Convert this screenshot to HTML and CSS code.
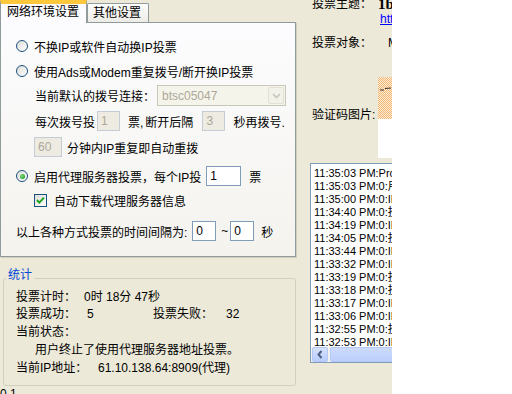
FILE: index.html
```html
<!DOCTYPE html>
<html>
<head>
<meta charset="utf-8">
<link rel="stylesheet" href="styles.css">
</head>
<body>
<div class="app">
  <div class="left">
    <div class="tabs">
      <div class="tab active">网络环境设置</div>
      <div class="tab">其他设置</div>
    </div>
    <div class="panel">
      <div class="row r1"><span class="radio"></span><span class="lbl">不换IP或软件自动换IP投票</span></div>
      <div class="row r2"><span class="radio"></span><span class="lbl">使用Ads或Modem重复拨号/断开换IP投票</span></div>
      <div class="row r3"><span>当前默认的拨号连接：</span>
        <div class="combo"><span class="combo-text">btsc05047</span>
          <span class="combo-btn"><svg width="9" height="6" viewBox="0 0 9 6"><path d="M1 1 L4.5 4.5 L8 1" fill="none" stroke="#C9C7BA" stroke-width="1.6"/></svg></span>
        </div>
      </div>
      <div class="row r4"><span>每次拨号投</span><span class="box dis w23 ml2">1</span><span class="ml8">票,</span><span class="ml2">断开后隔</span><span class="box dis w23 ml9">3</span><span class="ml8">秒再拨号.</span></div>
      <div class="row r5"><span class="box dis w28">60</span><span class="ml5">分钟内IP重复即自动重拨</span></div>
      <div class="row r6"><span class="radio on"><span class="dot"></span></span><span class="lbl">启用代理服务器投票，每个IP投</span><span class="box w35 ml5">1</span><span class="ml8">票</span></div>
      <div class="row r7"><span class="check"><svg width="11" height="11" viewBox="0 0 11 11"><path d="M2 5 L4.3 7.6 L9 2.6" fill="none" stroke="#21A121" stroke-width="2"/></svg></span><span class="ml7">自动下载代理服务器信息</span></div>
      <div class="row r8"><span>以上各种方式投票的时间间隔为:</span><span class="box w24 ml5">0</span><span class="ml5">~</span><span class="box w24 ml2">0</span><span class="ml7">秒</span></div>
    </div>
    <fieldset class="group">
      <legend>统计</legend>
      <div class="srow first"><span class="k w68">投票计时：</span><span>0时 18分 47秒</span></div>
      <div class="srow"><span class="k w71">投票成功：</span><span class="w66">5</span><span class="w73">投票失败：</span><span>32</span></div>
      <div class="srow"><span>当前状态：</span></div>
      <div class="srow indent"><span>用户终止了使用代理服务器地址投票。</span></div>
      <div class="srow"><span class="k w82">当前IP地址：</span><span>61.10.138.64:8909(代理)</span></div>
    </fieldset>
    <div class="ver">0.1</div>
  </div>
  <div class="right">
    <div class="ra"><span class="w66">投票主题：</span><span class="title">1b</span></div>
    <div class="rb"><span class="link">http://</span></div>
    <div class="rc"><span class="w76">投票对象：</span><span>M</span></div>
    <div class="rd">
      <span class="cap-lbl">验证码图片:</span>
      <div class="cap">
        <div class="cap-img"><svg width="14" height="41" viewBox="0 0 14 41"><path d="M2 13 L6 13 M7 11.5 L13 11" fill="none" stroke="#333" stroke-width="1"/></svg></div>
        <div class="cap-white"></div>
      </div>
    </div>
    <div class="list">
      <div class="lines">
        <div>11:35:03 PM:Proxy</div>
        <div>11:35:03 PM:0:用户终止</div>
        <div>11:35:00 PM:0:IP</div>
        <div>11:34:40 PM:0:投票</div>
        <div>11:34:19 PM:0:IP</div>
        <div>11:34:05 PM:0:投票</div>
        <div>11:33:44 PM:0:IP</div>
        <div>11:33:32 PM:0:IP</div>
        <div>11:33:19 PM:0:投票</div>
        <div>11:33:18 PM:0:投票</div>
        <div>11:33:17 PM:0:IP</div>
        <div>11:33:06 PM:0:IP</div>
        <div>11:32:55 PM:0:投票</div>
        <div>11:32:53 PM:0:IP</div>
      </div>
      <div class="hscroll">
        <span class="sbtn"><svg width="14" height="13" viewBox="0 0 14 13"><path d="M8.5 3 L5.5 6.5 L8.5 10" fill="none" stroke="#4D6185" stroke-width="2"/></svg></span>
        <span class="thumb"></span>
      </div>
    </div>
  </div>
</div>
</body>
</html>
```
FILE: styles.css
```css
* { box-sizing: border-box; }
html, body { margin: 0; padding: 0; background: #ffffff; }
body {
  font-family: "Liberation Sans", "Noto Sans CJK SC", sans-serif;
  font-size: 12px;
  color: #000;
}
.app {
  width: 392px;
  height: 394px;
  background: #ECE9D8;
  display: flex;
  overflow: hidden;
}
.left { width: 296px; flex: none; }
.tabs {
  height: 22px;
  display: flex;
  align-items: flex-end;
}
.tab {
  white-space: nowrap;
  line-height: 17px;
}
.tab.active {
  position: relative;
  z-index: 1;
  width: 87px;
  height: 23px;
  margin-bottom: -1px;
  background: #FCFCFE;
  border-left: 1px solid #919B9C;
  border-right: 1px solid #919B9C;
  border-top: 3px solid #FFC83C;
  box-shadow: inset 0 1px 0 #FFC83C, 0 -1px 0 #E68B2C;
  padding-left: 6px;
  padding-top: 1px;
}
.tab:not(.active) {
  width: 62px;
  height: 19px;
  border: 1px solid #919B9C;
  border-bottom: none;
  border-radius: 2px 2px 0 0;
  background: linear-gradient(#FEFEFE, #ECEBE6);
  padding-left: 5px;
  padding-top: 1px;
}
.panel {
  width: 296px;
  height: 235px;
  border: 1px solid #919B9C;
  background: linear-gradient(#FCFCFE, #F4F3EE);
  box-shadow: 1px 1px 0 #D0CEBF;
}
.row {
  display: flex;
  align-items: center;
  height: 20px;
  white-space: nowrap;
}
.r1 { margin-top: 13px; padding-left: 15px; }
.r2 { margin-top: 5px; padding-left: 15px; }
.r3 { margin-top: 4px; height: 21px; padding-left: 34px; }
.r4 { margin-top: 5px; padding-left: 34px; }
.r5 { margin-top: 6px; padding-left: 33px; }
.r6 { margin-top: 9px; padding-left: 15px; }
.r7 { margin-top: 4px; padding-left: 33px; }
.r8 { margin-top: 11px; padding-left: 15px; }
.lbl { margin-left: 6px; }
.radio {
  width: 12px;
  height: 12px;
  border-radius: 50%;
  border: 1px solid #1C5180;
  background: linear-gradient(135deg, #DCDCD7, #FFFFFF);
  display: flex;
  align-items: center;
  justify-content: center;
  flex: none;
}
.dot {
  width: 5px;
  height: 5px;
  border-radius: 50%;
  background: radial-gradient(circle at 40% 40%, #8FE08F, #21A121 70%);
}
.check {
  width: 13px;
  height: 13px;
  border: 1px solid #1C5180;
  background: linear-gradient(135deg, #DCDCD7, #FFFFFF);
  display: flex;
  align-items: center;
  justify-content: center;
  flex: none;
}
.combo {
  margin-left: 2px;
  width: 129px;
  height: 21px;
  border: 1px solid #C9C7BA;
  background: #F5F4EA;
  display: flex;
  align-items: center;
  justify-content: space-between;
  padding-left: 4px;
  padding-right: 1px;
}
.combo-text { color: #ACA899; }
.combo-btn {
  width: 16px;
  height: 17px;
  border: 1px solid #E3E1D6;
  border-radius: 2px;
  background: #F2F1EA;
  display: flex;
  align-items: center;
  justify-content: center;
}
.box {
  height: 20px;
  border: 1px solid #7F9DB9;
  background: #fff;
  display: flex;
  align-items: center;
  padding-left: 3px;
  flex: none;
}
.box.dis {
  border-color: #C5CCD4;
  background: #EDEBE2;
  color: #ACA899;
}
.w23 { width: 23px; }
.w24 { width: 24px; }
.w28 { width: 28px; }
.w35 { width: 35px; }
.ml2 { margin-left: 2px; }
.ml5 { margin-left: 5px; }
.ml7 { margin-left: 7px; }
.ml8 { margin-left: 8px; }
.ml9 { margin-left: 9px; }
.group {
  margin: 11px 0 0 3px;
  width: 293px;
  border: 1px solid #D0D0BF;
  border-radius: 3px;
  padding: 1px 0 8px 12px;
  min-width: 0;
}
.group legend {
  color: #0046D5;
  line-height: 14px;
  padding: 0 2px 6px;
  margin-left: -10px;
}
.srow {
  display: flex;
  line-height: 18px;
  height: 18px;
  white-space: nowrap;
}
.srow.first { line-height: 16px; height: 16px; }
.srow.indent { padding-left: 19px; }
.k { flex: none; }
.w66 { width: 66px; flex: none; }
.w68 { width: 68px; }
.w71 { width: 71px; }
.w73 { width: 73px; flex: none; }
.w76 { width: 76px; flex: none; }
.w82 { width: 82px; }
.ver { line-height: 12px; margin-top: 2px; }
.right {
  width: 96px;
  flex: none;
  overflow: hidden;
  padding-left: 16px;
  white-space: nowrap;
}
.ra {
  margin-top: -4px;
  height: 16px;
  line-height: 16px;
  display: flex;
}
.title {
  font-family: "Liberation Serif", serif;
  font-weight: bold;
  font-size: 15px;
}
.rb {
  height: 14px;
  line-height: 14px;
  padding-left: 68px;
}
.link { color: #0000FF; text-decoration: underline; }
.rc {
  margin-top: 9px;
  height: 16px;
  line-height: 16px;
  display: flex;
}
.rd {
  margin-top: 26px;
  display: flex;
}
.cap-lbl {
  width: 66px;
  flex: none;
  padding-top: 30px;
  line-height: 16px;
}
.cap { width: 60px; flex: none; }
.cap-img {
  height: 42px;
  background: repeating-conic-gradient(#F2B878 0 25%, #FCEBD2 0 50%) 0 0 / 2px 2px;
}
.cap-white { height: 39px; background: #fff; }
.list {
  margin-top: 5px;
  margin-left: -2px;
  width: 200px;
  height: 200px;
  border: 1px solid #7F9DB9;
  background: #fff;
  display: flex;
  flex-direction: column;
}
.lines {
  flex: 1;
  overflow: hidden;
  padding: 3px 0 0 3px;
  font-size: 11px;
  line-height: 13px;
}
.hscroll {
  height: 15px;
  flex: none;
  display: flex;
  background: #F3F1EC;
  padding-left: 1px;
}
.sbtn {
  width: 16px;
  height: 15px;
  border: 1px solid #B4C8F6;
  border-radius: 2px;
  background: linear-gradient(#D6E2FE, #B9CDFA);
  display: flex;
  align-items: center;
  justify-content: center;
}
.thumb {
  margin-left: 2px;
  flex: 1;
  height: 15px;
  border: 1px solid #B4C8F6;
  border-radius: 2px;
  background: linear-gradient(#CCDAFD, #BCCFFA);
}
```
